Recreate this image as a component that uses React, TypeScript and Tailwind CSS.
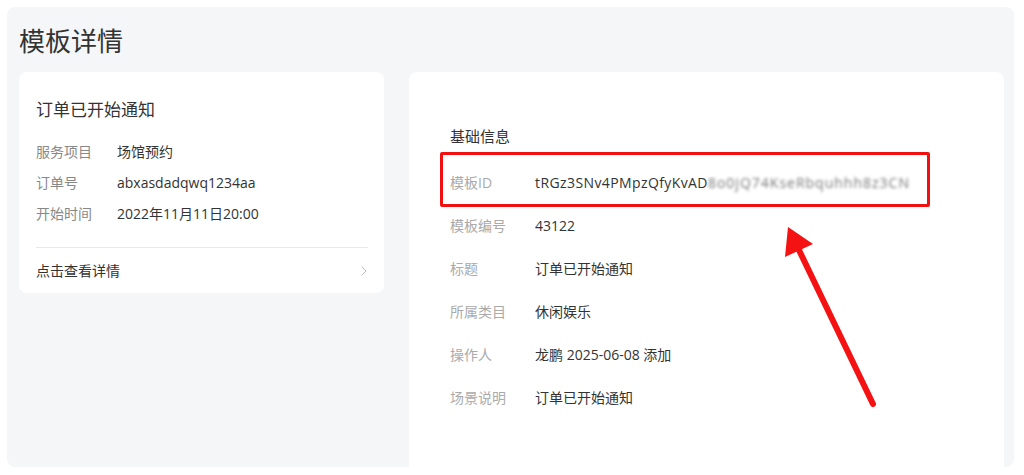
import { ChevronRight } from 'lucide-react'

const font = { fontFamily: '"Open Sans", "Noto Sans CJK SC", sans-serif' }

const orderRows = [
  ['服务项目', '场馆预约'],
  ['订单号', 'abxasdadqwq1234aa'],
  ['开始时间', '2022年11月11日20:00'],
]

const infoRows = [
  ['模板编号', '43122'],
  ['标题', '订单已开始通知'],
  ['所属类目', '休闲娱乐'],
  ['操作人', '龙鹏 2025-06-08 添加'],
  ['场景说明', '订单已开始通知'],
]

export default function App() {
  return (
    <div className="h-[475px] w-[1024px] bg-white pl-[7px] pr-[10px] pt-[7px]" style={font}>
      <div className="flex h-[460px] flex-col overflow-hidden rounded-lg bg-[#f5f6f8] pl-[12px] pr-[10px]">
        <h1 className="pt-[14px] text-[26px] leading-[40px] text-[#333]">模板详情</h1>

        <div className="mt-[11px] flex min-h-0 flex-1 items-start gap-[25px]">
          {/* notification preview */}
          <div className="w-[365px] rounded-lg bg-white pb-[11px] pl-[17px] pr-[16px] pt-[26px]">
            <p className="text-[17px] leading-[24px] text-[#333]">订单已开始通知</p>
            <div className="mt-[19px] flex flex-col gap-[9px]">
              {orderRows.map(([k, v]) => (
                <div key={k} className="flex text-[14px] leading-[22px]">
                  <span className="w-[81px] text-[#888]">{k}</span>
                  <span className="text-[#333]">{v}</span>
                </div>
              ))}
            </div>
            <div className="mt-[22px] border-t border-[#e8e8e8] pt-[12px]">
              <div className="flex items-center justify-between text-[14px] leading-[22px] text-[#333]">
                <span>点击查看详情</span>
                <ChevronRight size={16} strokeWidth={1.5} className="mr-[-4px] text-[#bbb]" />
              </div>
            </div>
          </div>

          {/* basic info */}
          <div className="relative flex-1 self-stretch rounded-t-lg bg-white px-[41px] pt-[53px]">
            <p className="text-[15px] leading-[22px] text-[#333]">基础信息</p>
            <div className="mt-[13.5px] flex flex-col">
              <div className="relative flex h-[43px] items-center whitespace-nowrap text-[14px]">
                <span className="w-[85px] shrink-0 text-[#aaa]">模板ID</span>
                <span className="tracking-[0.4px] text-[#333]">tRGz3SNv4PMpzQfyKvAD</span>
                <span className="tracking-[1px] text-[#777] blur-[1.4px]">8o0jQ74KseRbquhhh8z3CN</span>
                <div className="absolute left-[-10px] top-[-8.5px] h-[55px] w-[490px] rounded-[2px] border-[3px] border-[#f01010]" />
              </div>
              {infoRows.map(([k, v]) => (
                <div key={k} className="flex h-[43px] items-center text-[14px]">
                  <span className="w-[85px] text-[#aaa]">{k}</span>
                  <span className="text-[#333]">{v}</span>
                </div>
              ))}
            </div>

            <svg className="pointer-events-none absolute left-0 top-0 h-full w-full" fill="none">
              <g transform="translate(-409,-72)">
                <line x1="798" y1="248" x2="873" y2="404" stroke="#f51212" strokeWidth="6" strokeLinecap="round" />
                <polygon points="788,227 785,257 813,244" fill="#f51212" />
              </g>
            </svg>
          </div>
        </div>
      </div>
    </div>
  )
}
